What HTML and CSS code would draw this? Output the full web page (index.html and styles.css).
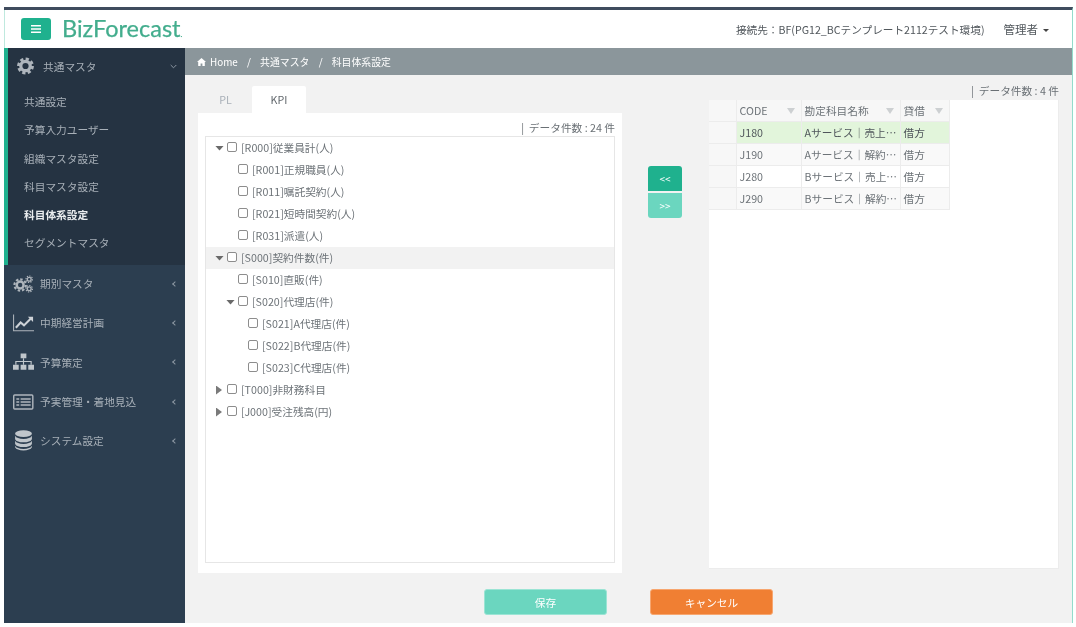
FILE: index.html
```html
<!DOCTYPE html>
<html lang="ja">
<head>
<meta charset="utf-8">
<title>BizForecast</title>
<link rel="stylesheet" href="styles.css">
</head>
<body>
<div class="app">
  <header class="topbar">
    <div class="brand">
      <button class="menu-btn"><svg width="10" height="8" viewBox="0 0 10 8"><path d="M0 0h10v1.6H0zM0 3.2h10v1.6H0zM0 6.4h10V8H0z" fill="#fff"/></svg></button>
      <span class="logo">BizForecast<sup class="logo-dot">.</sup></span>
    </div>
    <div class="top-right">
      <span>接続先：BF(PG12_BCテンプレート2112テスト環境)</span>
      <span class="user">管理者<i class="caret"></i></span>
    </div>
  </header>
  <div class="body">
    <aside class="sidebar">
      <div class="open-group">
        <div class="nav-head">
          <svg class="nav-icon" width="17" height="18" viewBox="0 0 18 18"><circle cx="9" cy="9" r="5" fill="none" stroke="#aeb5bc" stroke-width="3.4"/><circle cx="9" cy="9" r="7.4" fill="none" stroke="#aeb5bc" stroke-width="3" stroke-dasharray="3.4 2.4"/></svg>
          <span>共通マスタ</span>
          <svg class="chev" width="7" height="5" viewBox="0 0 7 5"><path d="M.7 1l2.8 2.8L6.3 1" fill="none" stroke="#8d98a3" stroke-width="1"/></svg>
        </div>
        <ul class="sub">
          <li>共通設定</li>
          <li>予算入力ユーザー</li>
          <li>組織マスタ設定</li>
          <li>科目マスタ設定</li>
          <li class="current">科目体系設定</li>
          <li>セグメントマスタ</li>
        </ul>
      </div>
      <div class="nav-item">
        <svg width="22" height="18" viewBox="0 0 22 18"><circle cx="7.5" cy="10" r="3.6" fill="none" stroke="#aeb5bc" stroke-width="2.6"/><circle cx="7.5" cy="10" r="6" fill="none" stroke="#aeb5bc" stroke-width="2.2" stroke-dasharray="2.6 2"/><circle cx="17" cy="4" r="2" fill="none" stroke="#aeb5bc" stroke-width="1.4"/><circle cx="17" cy="4" r="3.4" fill="none" stroke="#aeb5bc" stroke-width="1.2" stroke-dasharray="1.4 1.2"/><circle cx="17" cy="14" r="2" fill="none" stroke="#aeb5bc" stroke-width="1.4"/><circle cx="17" cy="14" r="3.4" fill="none" stroke="#aeb5bc" stroke-width="1.2" stroke-dasharray="1.4 1.2"/></svg>
        <span>期別マスタ</span><b class="lt"></b>
      </div>
      <div class="nav-item">
        <svg width="22" height="18" viewBox="0 0 22 18"><path d="M.6 0v17.2H22" fill="none" stroke="#aeb5bc" stroke-width="1.1"/><path d="M3 14l5-5.5 3.5 3L19 4" fill="none" stroke="#cdd2d7" stroke-width="2.2"/><path d="M15.5 2.5H21V8z" fill="#cdd2d7"/></svg>
        <span>中期経営計画</span><b class="lt"></b>
      </div>
      <div class="nav-item">
        <svg width="22" height="18" viewBox="0 0 22 18"><path d="M8 0h6v5H8zM0 12h6v5H0zM8 12h6v5H8zM16 12h6v5h-6z" fill="#c0c6cb"/><path d="M11 5v7M3 12V8.500h16V12" fill="none" stroke="#c0c6cb" stroke-width="1.200"/></svg>
        <span>予算策定</span><b class="lt"></b>
      </div>
      <div class="nav-item">
        <svg width="22" height="18" viewBox="0 0 22 18"><rect x=".75" y="1.750" width="20" height="14.500" rx="1" fill="none" stroke="#aeb5bc" stroke-width="1.500"/><path d="M3.500 5h3v1.600h-3zM3.500 8.200h3v1.600h-3zM3.500 11.400h3v1.600h-3zM8 5h10.500v1.600H8zM8 8.200h10.500v1.600H8zM8 11.400h10.500v1.600H8z" fill="#aeb5bc"/></svg>
        <span>予実管理・着地見込</span><b class="lt"></b>
      </div>
      <div class="nav-item">
        <svg class="db" width="22" height="21" viewBox="0 0 18 20"><ellipse cx="9" cy="3.500" rx="8" ry="3.200" fill="#c0c6cb"/><path d="M1 5.500c1 2 4 3 8 3s7-1 8-3v3.200c-1 2-4 3-8 3s-7-1-8-3zM1 10.300c1 2 4 3 8 3s7-1 8-3v3c-1 2-4 3-8 3s-7-1-8-3zM1 15c1 2 4 3 8 3s7-1 8-3v1.500c-1 2-4 3-8 3s-7-1-8-3z" fill="#c0c6cb"/></svg>
        <span>システム設定</span><b class="lt"></b>
      </div>
    </aside>
    <main class="main">
      <nav class="crumbs">
        <svg width="9" height="8" viewBox="0 0 9 8"><path d="M4.500 0L9 4H7.800v4H5.400V5.400H3.600V8H1.200V4H0z" fill="#fff"/></svg>
        <span>Home</span><span class="sep">/</span><span>共通マスタ</span><span class="sep">/</span><span>科目体系設定</span>
      </nav>
      <div class="workspace">
        <section class="left">
          <div class="tabs"><div class="tab">PL</div><div class="tab active">KPI</div></div>
          <div class="panel">
            <div class="count">|&nbsp; データ件数 : 24 件</div>
            <div class="tree">
              <div class="row"><i class="arrow down"></i><i class="check"></i><span>[R000]従業員計(人)</span></div>
              <div class="row l1"><i class="check"></i><span>[R001]正規職員(人)</span></div>
              <div class="row l1"><i class="check"></i><span>[R011]嘱託契約(人)</span></div>
              <div class="row l1"><i class="check"></i><span>[R021]短時間契約(人)</span></div>
              <div class="row l1"><i class="check"></i><span>[R031]派遣(人)</span></div>
              <div class="row hover"><i class="arrow down"></i><i class="check"></i><span>[S000]契約件数(件)</span></div>
              <div class="row l1"><i class="check"></i><span>[S010]直販(件)</span></div>
              <div class="row l1b"><i class="arrow down"></i><i class="check"></i><span>[S020]代理店(件)</span></div>
              <div class="row l2"><i class="check"></i><span>[S021]A代理店(件)</span></div>
              <div class="row l2"><i class="check"></i><span>[S022]B代理店(件)</span></div>
              <div class="row l2"><i class="check"></i><span>[S023]C代理店(件)</span></div>
              <div class="row"><i class="arrow right"></i><i class="check"></i><span>[T000]非財務科目</span></div>
              <div class="row"><i class="arrow right"></i><i class="check"></i><span>[J000]受注残高(円)</span></div>
            </div>
          </div>
        </section>
        <div class="movers">
          <button class="mv dark">&lt;&lt;</button>
          <button class="mv light">&gt;&gt;</button>
        </div>
        <section class="right">
          <div class="count top">|&nbsp; データ件数 : 4 件</div>
          <div class="grid-panel">
            <div class="grid">
              <div class="c h"></div><div class="c h">CODE<i class="funnel"></i></div><div class="c h">勘定科目名称<i class="funnel"></i></div><div class="c h">貸借<i class="funnel"></i></div>
              <div class="c g"></div><div class="c sel">J180</div><div class="c sel">Aサービス｜売上…</div><div class="c sel">借方</div>
              <div class="c g"></div><div class="c alt">J190</div><div class="c alt">Aサービス｜解約…</div><div class="c alt">借方</div>
              <div class="c g"></div><div class="c">J280</div><div class="c">Bサービス｜売上…</div><div class="c">借方</div>
              <div class="c g"></div><div class="c alt">J290</div><div class="c alt">Bサービス｜解約…</div><div class="c alt">借方</div>
            </div>
          </div>
        </section>
      </div>
      <div class="actions">
        <button class="act save">保存</button>
        <button class="act cancel">キャンセル</button>
      </div>
    </main>
  </div>
</div>
</body>
</html>
```
FILE: styles.css
```css
* { box-sizing: border-box; }
html, body { margin: 0; height: 100%; background: #fff; overflow: hidden; }
body { padding: 7px 3px 4px 4px; font-family: "Noto Sans CJK JP", "Noto Sans", sans-serif; font-size: 10.7px; color: #6d7378; }
ul { list-style: none; margin: 0; padding: 0; }
i { display: inline-block; font-style: normal; }
button { font-family: inherit; border: 0; padding: 0; }

.app { height: 616px; display: flex; flex-direction: column; border-top: 3px solid #3f4c5e; border-right: 1px solid #93dccb; filter: blur(.3px); }

.topbar { height: 38px; flex: none; display: flex; justify-content: space-between; align-items: center; background: #fff; padding: 0 23px 0 16px; border-left: 1px solid #bfe9de; }
.brand { display: flex; align-items: center; gap: 11px; }
.menu-btn { width: 30px; height: 22px; background: #1fb18e; border-radius: 3px; display: flex; align-items: center; justify-content: center; }
.logo { font-family: "Lato", sans-serif; font-size: 23.5px; color: #43ad8d; line-height: 1; -webkit-text-stroke: .25px #43ad8d; }
.logo-dot { font-size: 8px; vertical-align: baseline; }
.top-right { display: flex; align-items: center; gap: 19px; font-size: 10.65px; color: #51575c; }
.user { font-size: 11.5px; }
.caret { width: 0; height: 0; margin-left: 5px; vertical-align: 2px; border: 3.5px solid transparent; border-top-color: #444; border-bottom: 0; }

.body { flex: 1; display: flex; min-height: 0; }
.sidebar { width: 181px; flex: none; background: #2c3e50; color: #a8b0b8; font-size: 10.7px; }
.open-group { height: 217px; background: #253342; border-left: 4px solid #1fb18e; }
.nav-head { height: 36px; display: flex; align-items: center; padding: 0 8px 0 9px; gap: 9px; }
.nav-head span { flex: 1; }
.sub { padding-top: 4px; }
.sub li { height: 28.3px; line-height: 28.3px; padding-left: 16px; }
.sub li.current { color: #e9ecee; font-weight: 700; }
.nav-item { height: 39.3px; display: flex; align-items: center; padding: 0 8px 2px 9px; gap: 6px; }
.nav-item span { flex: 1; }
.nav-item svg { flex: none; width: 21px; }
.lt { width: 4px; height: 4px; border-left: 1px solid #8d98a3; border-bottom: 1px solid #8d98a3; transform: rotate(45deg); }

.main { flex: 1; min-width: 0; background: #f2f2f2; display: flex; flex-direction: column; }
.crumbs { height: 27px; flex: none; background: #8b969b; color: #fff; display: flex; align-items: center; gap: 3px; padding-left: 12px; font-size: 9.9px; }
.crumbs svg { margin-right: 1px; }
.sep { margin: 0 6.2px; }

.workspace { flex: 1; min-height: 0; display: flex; padding: 0 13px; }
.left { width: 424px; flex: none; padding-top: 11px; }
.tabs { display: flex; height: 27px; padding-left: 1px; }
.tab { width: 53px; text-align: center; line-height: 27px; color: #a9b0b8; }
.tab.active { width: 54px; background: #fff; color: #60666b; border-radius: 2px 2px 0 0; }
.panel { height: 460px; background: #fff; padding: 7px 7px 10px; display: flex; flex-direction: column; }
.count { height: 16px; line-height: 16px; text-align: right; font-size: 10.7px; color: #6a7075; flex: none; }
.tree { flex: 1; border: 1px solid #e6e6e6; }
.row { height: 22px; display: flex; align-items: center; padding-left: 9px; color: #6d7378; }
.row span { margin-top: -2px; }
.row.hover { background: #f2f2f2; }
.row.l1 { padding-left: 32px; }
.row.l1b { padding-left: 20px; }
.row.l2 { padding-left: 42px; }
.arrow { flex: none; background: #6a6a6a; margin-right: 3px; }
.arrow.down { width: 9px; height: 5px; clip-path: polygon(0 0, 100% 0, 50% 100%); }
.arrow.right { width: 6px; height: 9px; margin-left: 1px; margin-right: 5px; clip-path: polygon(0 0, 100% 50%, 0 100%); background: #7a7a7a; }
.check { width: 10px; height: 10px; flex: none; border: 1px solid #8d8d8d; border-radius: 2px; margin-right: 4px; margin-top: -3px; background: #fff; }

.movers { width: 34px; flex: none; margin: 91px 0 0 26px; display: flex; flex-direction: column; gap: 2px; }
.mv { height: 25px; color: #fff; font-size: 10px; }
.mv.dark { background: #1fb18e; border-radius: 3px 3px 0 0; }
.mv.light { background: #6bd6bf; border-radius: 0 0 3px 3px; }

.right { width: 350px; flex: none; margin-left: 27px; padding-top: 8px; display: flex; flex-direction: column; }
.count.top { height: 17px; }
.grid-panel { height: 469px; background: #fff; border: 1px solid #ececec; border-width: 0 1px 1px 0; }
.grid { display: grid; grid-template-columns: 28px 65px 99px 49px; grid-auto-rows: 22px; width: 241px; }
.c { display: flex; align-items: center; position: relative; padding-left: 2.5px; color: #6d7378; white-space: nowrap; overflow: hidden; border-right: 1px solid #ececec; border-bottom: 1px solid #ececec; }
.c.h, .c.g { background: #f7f7f7; }
.c.sel { background: #e2f5db; color: #50565b; }
.c.alt { background: #f9f9f9; }
.funnel { position: absolute; right: 6px; top: 8px; width: 0; height: 0; border: 4px solid transparent; border-top: 6px solid #cdd0d2; border-bottom: 0; }

.actions { height: 50px; flex: none; display: flex; padding: 16px 0 0 299px; gap: 43px; }
.act { height: 26px; color: #fff; font-size: 10.7px; border-radius: 3px; }
.save { width: 123px; background: #6bd6bf; border: 1px solid #9be4d4; }
.cancel { width: 123px; background: #f07f33; border: 1px solid #f7a66f; }
```
